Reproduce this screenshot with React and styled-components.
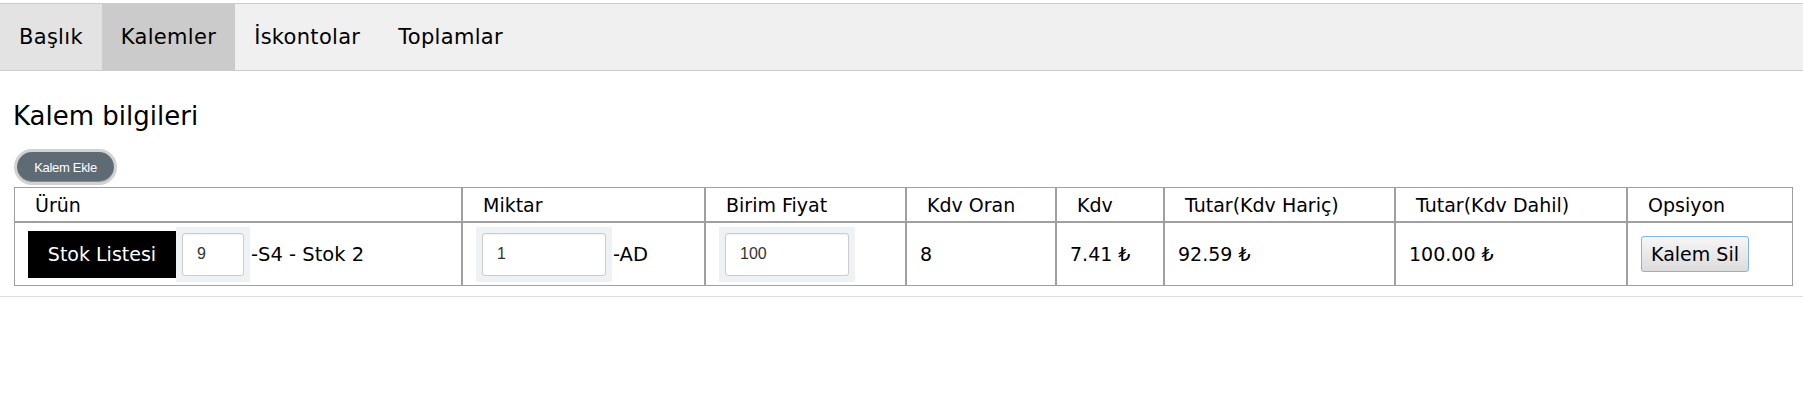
import React from 'react';
import styled, { createGlobalStyle } from 'styled-components';

const GlobalStyle = createGlobalStyle`
  html, body {
    margin: 0;
    padding: 0;
    background: #fff;
  }
  body {
    font-family: 'DejaVu Sans', Verdana, sans-serif;
    color: #000;
  }
`;

const TabBar = styled.div`
  margin-top: 3px;
  display: flex;
  height: 66px;
  background-color: #f0f0f0;
  border-top: 1px solid #cccccc;
  border-bottom: 1px solid #cccccc;
`;

const Tab = styled.div`
  display: flex;
  align-items: center;
  padding: 0 19px;
  font-size: 21px;
  letter-spacing: 0.3px;
  color: #000;
  background-color: ${props => props.active ? '#cbcbcb' : props.hover ? '#e3e3e3' : 'transparent'};
  cursor: pointer;
`;

const Section = styled.div`
  padding: 0 10px 10px 14px;
  border-bottom: 1px solid #dddddd;
`;

const Heading = styled.h3`
  margin: 30px 0 18px -1px;
  font-size: 26px;
  font-weight: normal;
  line-height: 30px;
  color: #000;
`;

const AddButton = styled.button`
  display: block;
  width: 103px;
  height: 36px;
  margin: 0 0 2px 0;
  padding: 0;
  border: 3px solid #d2d2d2;
  border-radius: 18px;
  background-color: #5f6b74;
  color: #fff;
  font-family: 'Liberation Sans', Arial, sans-serif;
  font-size: 13px;
  letter-spacing: -0.3px;
  box-shadow: inset 0 -1px 0 #8a8a8a;
`;

const Table = styled.table`
  width: 1779px;
  table-layout: fixed;
  border-collapse: separate;
  border-spacing: 0;
`;

const HeadCell = styled.th`
  height: 33px;
  padding: 0 0 0 20px;
  border: 1px solid #a0a0a0;
  text-align: left;
  font-weight: normal;
  font-size: 19px;
  vertical-align: middle;
  white-space: nowrap;
`;

const Cell = styled.td`
  height: 62px;
  padding: 0 0 0 13px;
  border: 1px solid #a0a0a0;
  font-size: 19px;
  vertical-align: middle;
  white-space: nowrap;
`;

const CellRow = styled.div`
  display: flex;
  align-items: center;
`;

const StockButton = styled.button`
  width: 148px;
  height: 47px;
  padding: 0;
  border: none;
  background-color: #000;
  color: #fff;
  font-family: 'DejaVu Sans', Verdana, sans-serif;
  font-size: 19px;
`;

const InputWrap = styled.div`
  padding: 6px;
  background-color: #eef2f5;
`;

const Input = styled.input`
  box-sizing: border-box;
  display: block;
  width: ${props => props.w}px;
  height: 43px;
  padding: 0 0 0 14px;
  border: 1px solid #cccccc;
  border-radius: 3px;
  background: #fff;
  box-shadow: inset 0 1px 1px rgba(0, 0, 0, 0.06);
  font-family: 'Liberation Sans', Arial, sans-serif;
  font-size: 16px;
  color: #333;
  outline: none;
`;

const Suffix = styled.span`
  margin-left: 1px;
  font-size: 19.5px;
`;

const DeleteButton = styled.button`
  width: 108px;
  height: 36px;
  padding: 0;
  border: 1px solid #7eb4ea;
  border-radius: 3px;
  background: linear-gradient(#f6f6f6, #dcdcdc);
  color: #000;
  font-family: 'DejaVu Sans', Verdana, sans-serif;
  font-size: 19px;
`;

const columns = [
  { title: 'Ürün', width: 448 },
  { title: 'Miktar', width: 243 },
  { title: 'Birim Fiyat', width: 201 },
  { title: 'Kdv Oran', width: 150 },
  { title: 'Kdv', width: 108 },
  { title: 'Tutar(Kdv Hariç)', width: 231 },
  { title: 'Tutar(Kdv Dahil)', width: 232 },
  { title: 'Opsiyon', width: 166 },
];

const tabs = ['Başlık', 'Kalemler', 'İskontolar', 'Toplamlar'];

export default function App() {
  return (
    <>
      <GlobalStyle />
      <TabBar>
        {tabs.map((t, i) => (
          <Tab key={t} hover={i === 0} active={i === 1}>{t}</Tab>
        ))}
      </TabBar>
      <Section>
        <Heading>Kalem bilgileri</Heading>
        <AddButton>Kalem Ekle</AddButton>
        <Table>
          <colgroup>
            {columns.map(c => <col key={c.title} style={{ width: c.width }} />)}
          </colgroup>
          <thead>
            <tr>
              {columns.map(c => <HeadCell key={c.title}>{c.title}</HeadCell>)}
            </tr>
          </thead>
          <tbody>
            <tr>
              <Cell>
                <CellRow>
                  <StockButton>Stok Listesi</StockButton>
                  <InputWrap><Input w={62} defaultValue="9" /></InputWrap>
                  <Suffix>-S4 - Stok 2</Suffix>
                </CellRow>
              </Cell>
              <Cell>
                <CellRow>
                  <InputWrap><Input w={124} defaultValue="1" /></InputWrap>
                  <Suffix>-AD</Suffix>
                </CellRow>
              </Cell>
              <Cell>
                <CellRow>
                  <InputWrap><Input w={124} defaultValue="100" /></InputWrap>
                </CellRow>
              </Cell>
              <Cell>8</Cell>
              <Cell>7.41 ₺</Cell>
              <Cell>92.59 ₺</Cell>
              <Cell>100.00 ₺</Cell>
              <Cell>
                <DeleteButton>Kalem Sil</DeleteButton>
              </Cell>
            </tr>
          </tbody>
        </Table>
      </Section>
    </>
  );
}
